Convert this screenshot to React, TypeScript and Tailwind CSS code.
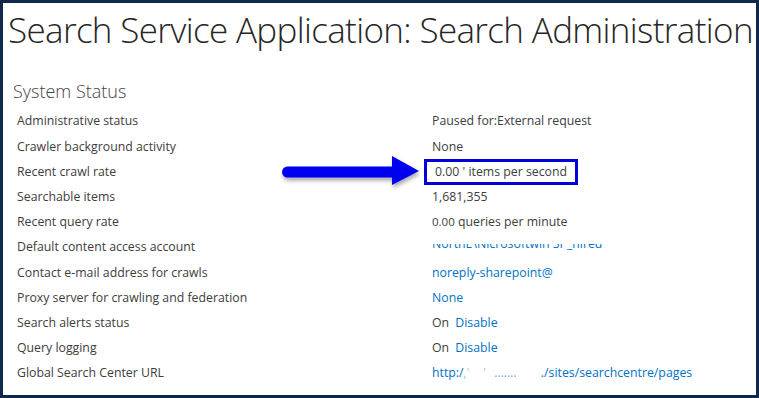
import React from 'react';

type Row = { label: string; value: React.ReactNode };

const link = 'text-[#0072c6]';

function Arrow() {
  return (
    <svg width="140" height="36" viewBox="0 0 140 36" className="shrink-0">
      <defs>
        <filter id="sh" x="-10%" y="-30%" width="130%" height="170%">
          <feDropShadow dx="1" dy="3" stdDeviation="2" floodColor="#000" floodOpacity="0.35" />
        </filter>
      </defs>
      <g filter="url(#sh)" fill="#0000f0">
        <rect x="2" y="12.5" width="116" height="11" rx="5.5" />
        <polygon points="112,2 139,17 112,31" />
      </g>
    </svg>
  );
}

// the reference hides the top half of this value
function Redacted({ text, clip }: { text: string; clip: number }) {
  return (
    <div className="flex flex-col justify-end overflow-hidden" style={{ height: clip }}>
      <span className={`${link} leading-[17px]`}>{text}</span>
    </div>
  );
}

export default function App() {
  const rows: Row[] = [
    { label: 'Administrative status', value: 'Paused for:External request' },
    { label: 'Crawler background activity', value: 'None' },
    { label: 'Recent crawl rate', value: null },
    { label: 'Searchable items', value: '1,681,355' },
    { label: 'Recent query rate', value: <span><span className="text-[11.5px]">0.00</span> queries per minute</span> },
    {
      label: 'Default content access account',
      value: <Redacted text="NorthE\Nicrosoftwin SP_hired" clip={8} />,
    },
    { label: 'Contact e-mail address for crawls', value: <span className={link}>noreply-sharepoint@</span> },
    { label: 'Proxy server for crawling and federation', value: <span className={link}>None</span> },
    { label: 'Search alerts status', value: <span>On <span className={`${link} ml-[3px]`}>Disable</span></span> },
    { label: 'Query logging', value: <span>On <span className={`${link} ml-[3px]`}>Disable</span></span> },
    {
      label: 'Global Search Center URL',
      value: (
        <span className={link}>
          http:/<span className="opacity-40">,'</span>
          <span className="ml-[14px] opacity-40">'</span>
          <span className="ml-[8px] opacity-60">.......</span>
          <span className="ml-[24px]">./sites/searchcentre/pages</span>
        </span>
      ),
    },
  ];

  return (
    <div
      className="w-[759px] h-[398px] border-[3px] border-[#10284a] bg-white overflow-hidden text-[#3d3d3d]"
      style={{ fontFamily: '"Open Sans", "Noto Sans", sans-serif' }}
    >
      <h1 className="pl-[5px] pt-[3px] text-[35px] font-light leading-[48px] text-[#262626] whitespace-nowrap tracking-[-0.65px]">
        Search Service Application: Search Administration
      </h1>
      <h2 className="pl-[10px] mt-[25px] text-[18px] font-light leading-[24px] text-[#444]">System Status</h2>
      <div className="mt-[6px] flex flex-col text-[12.3px]">
        {rows.map((r, i) => (
          <div key={i} className="flex items-center h-[25.2px]">
            <div className="w-[415px] pl-[14px] shrink-0">{r.label}</div>
            {i === 2 ? (
              <div className="flex items-center ml-[-138px]">
                <Arrow />
                <div className="ml-[4px] h-[26px] w-[154px] border-[3px] border-[#0000dd] pl-[8px] flex items-center">
                  0.00 ' items per second
                </div>
              </div>
            ) : (
              <div className="pl-[14px]">{r.value}</div>
            )}
          </div>
        ))}
      </div>
    </div>
  );
}
